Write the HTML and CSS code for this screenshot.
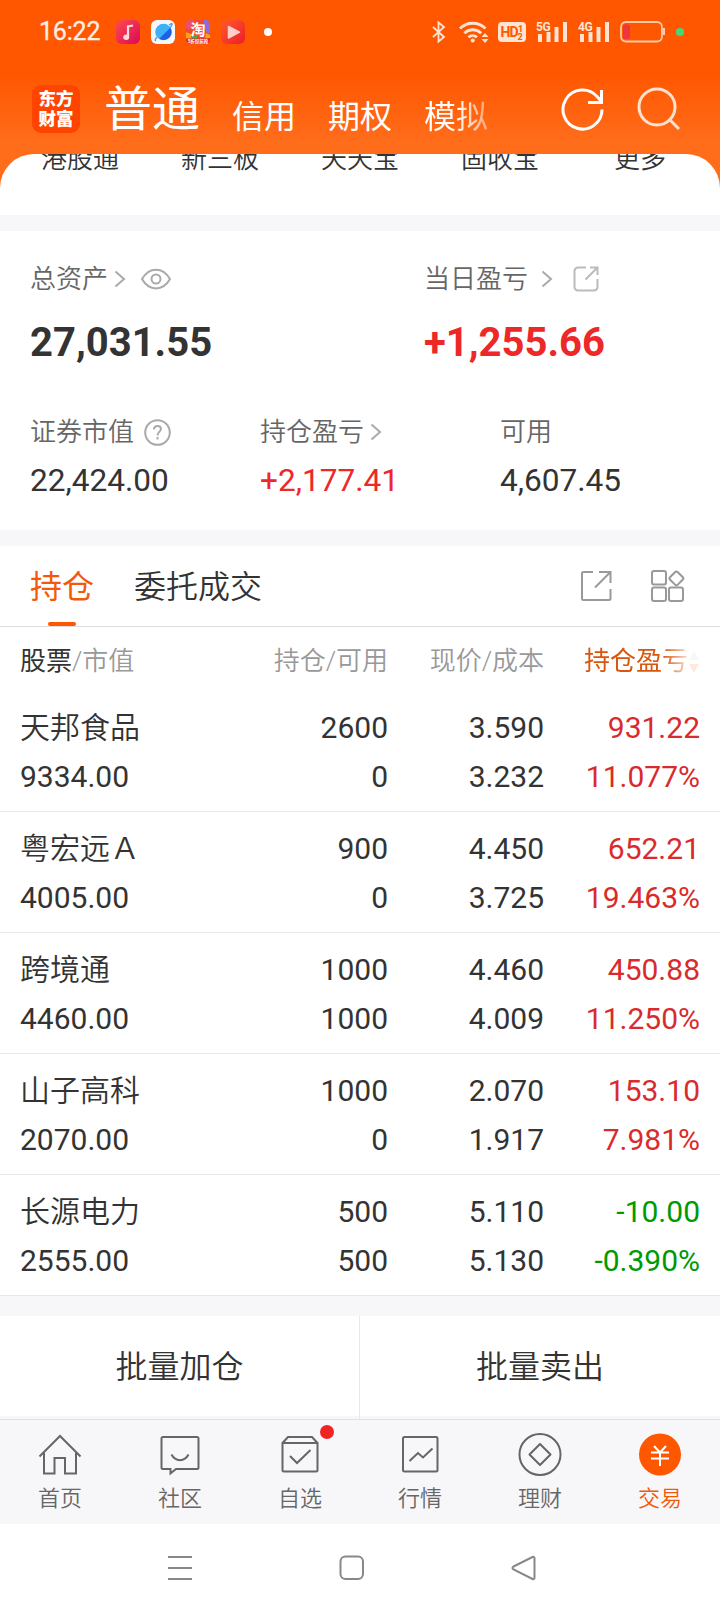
FILE: index.html
```html
<!DOCTYPE html>
<html lang="zh-CN">
<head>
    <meta charset="UTF-8">
    <meta name="viewport" content="width=device-width, initial-scale=1.0">
    <title>东方财富 - 交易</title>
    <link rel="stylesheet" href="styles.css">
</head>
<body>
    <header class="header">
        <!-- 状态栏 -->
        <div class="status-bar">
            <span class="time">16:22</span>
            <div class="status-apps">
                <svg width="24" height="24" viewBox="0 0 24 24">
                    <defs><linearGradient id="music" x1="0" y1="0" x2="1" y2="1"><stop offset="0" stop-color="#ff4a4f"/><stop offset="1" stop-color="#d90a58"/></linearGradient></defs>
                    <rect width="24" height="24" rx="6" fill="url(#music)"/>
                    <path d="M12 17V6.500l5-1" fill="none" stroke="#ffdcdc" stroke-width="2.200"/>
                    <ellipse cx="10.200" cy="17.300" rx="2.900" ry="2.700" fill="#ffdcdc"/>
                </svg>
                <svg width="24" height="24" viewBox="0 0 24 24">
                    <defs><linearGradient id="globe" x1="0" y1="0" x2="1" y2="1"><stop offset=".55" stop-color="#3fb0f8"/><stop offset=".6" stop-color="#1c62e4"/></linearGradient></defs>
                    <rect width="24" height="24" rx="6" fill="#f5f7fb"/>
                    <circle cx="12.500" cy="12" r="8.300" fill="url(#globe)"/>
                    <path d="M6 17c-2 2.500-2.500 4-1 3.500M18 5c2-1.500 3.500-2 3-.5s-1 2-2 3.500" fill="none" stroke="#3e9df5" stroke-width="1.300"/>
                </svg>
                <svg width="24" height="24" viewBox="0 0 24 24">
                    <rect width="24" height="24" rx="5" fill="#f04a2a"/>
                    <path d="M0 8V5a5 5 0 0 1 5-5h3L4 10z" fill="#e8507c"/>
                    <path d="M17 0h2a5 5 0 0 1 5 5v9l-4-2z" fill="#8b6be0"/>
                    <path d="M0 12l5 2v5H0zM20 13l4 2v3h-5z" fill="#f7a21c"/>
                    <path d="M5 15h6v4H5z" fill="#4aa84c"/>
                    <path d="M0 18.500h24V19a5 5 0 0 1-5 5H5a5 5 0 0 1-5-5z" fill="#e3201b"/>
                    <text x="12" y="15" class="app-name">淘</text>
                    <text x="12" y="23.300" class="app-sub">5折提前抢</text>
                </svg>
                <svg width="24" height="24" viewBox="0 0 24 24">
                    <defs><linearGradient id="video" x1="0" y1="0" x2="1" y2="1"><stop offset="0" stop-color="#ff5a2c"/><stop offset="1" stop-color="#ea1f28"/></linearGradient></defs>
                    <rect width="24" height="24" rx="6" fill="url(#video)"/>
                    <path d="M7.500 6.500v11.500L18.500 12.200z" fill="#ffd0c8" stroke="#ffd0c8" stroke-width="1.500" stroke-linejoin="round"/>
                </svg>
                <i class="dot-more"></i>
            </div>
            <div class="status-right">
                <svg width="16" height="24" viewBox="0 0 16 24">
                    <path d="M2 7l11 10-5.500 4.500V2.500L13 7 2 17" stroke="#ffe3d3" stroke-width="1.800"/>
                </svg>
                <svg class="wifi" width="32" height="24" viewBox="0 0 32 24">
                    <path d="M2 8.500c7-7 18.500-7 25.500 0M6.300 13.200c4.700-4.600 12.200-4.600 16.900 0M10.500 17.300c2.400-2.300 6-2.300 8.400 0" stroke="#ffe3d3" stroke-width="2.800"/>
                    <circle cx="14.700" cy="20.500" r="2" fill="#ffe3d3"/>
                    <path d="M23.500 17l3.500-4 3.500 4zM23.500 19l3.500 4 3.500-4z" fill="#ffe3d3"/>
                </svg>
                <svg class="hd" width="28" height="20" viewBox="0 0 28 20">
                    <rect width="28" height="20" rx="4" fill="#ffe3d3"/>
                    <text x="2.500" y="15.300" class="hd-text">HD</text>
                    <text x="20" y="9.500" class="hd-num">1</text>
                    <text x="19.500" y="17.500" class="hd-num">2</text>
                </svg>
                <svg class="signal" width="32" height="24" viewBox="0 0 32 24">
                    <text x="0" y="10.500">5G</text>
                    <path d="M2 14h4v8H2zM10.500 12h4v10h-4zM18.500 7h4v15h-4zM27 2h4v20h-4z"/>
                </svg>
                <svg class="signal" width="32" height="24" viewBox="0 0 32 24">
                    <text x="0" y="10.500">4G</text>
                    <path d="M2 14h4v8H2zM10.500 12h4v10h-4zM18.500 7h4v15h-4zM27 2h4v20h-4z"/>
                </svg>
                <svg class="battery" width="46" height="22" viewBox="0 0 46 22">
                    <rect x="1" y="1" width="41" height="19.500" rx="5" fill="none" stroke="#ffc9a8" stroke-width="1.800"/>
                    <rect x="3" y="3.500" width="7" height="14.500" rx="2.500" fill="#ef3340"/>
                    <path d="M44 7v7" stroke="#ffc9a8" stroke-width="2"/>
                </svg>
                <i class="dot-green"></i>
            </div>
        </div>

        <!-- 账户类型导航 -->
        <div class="nav">
            <div class="logo"><span>东方</span><span>财富</span></div>
            <nav class="nav-tabs">
                <a class="active">普通</a>
                <a>信用</a>
                <a>期权</a>
                <a class="fade">模拟</a>
            </nav>
            <svg class="refresh" width="44" height="44" viewBox="0 0 44 44" stroke="#fff" stroke-width="3">
                <path d="M41 22.500A19.500 19.500 0 1 1 36 9.500L40.500 14.500"/>
                <path d="M40.500 3v12.500H27"/>
            </svg>
            <svg class="search" width="44" height="44" viewBox="0 0 44 44" stroke="#ffe1cf" stroke-width="3">
                <circle cx="20" cy="20" r="18"/>
                <path d="M32 32l10 10"/>
            </svg>
        </div>
    </header>

    <!-- 快捷入口 -->
    <div class="quick-wrap">
        <div class="quick">
            <span>港股通</span>
            <span>新三板</span>
            <span>天天宝</span>
            <span>固收宝</span>
            <span>更多</span>
        </div>
    </div>

    <!-- 资产 -->
    <section class="assets">
        <div class="assets-main">
            <div>
                <div class="label"><span>总资产</span>
                    <svg class="arrow" width="12" height="18" viewBox="0 0 12 18"><path d="M1.500 1.500L10 9l-8.500 7.500"/></svg>
                    <svg class="eye" width="32" height="22" viewBox="0 0 32 22"><path d="M2 11C9-1.500 23-1.500 30 11 23 23.500 9 23.500 2 11z"/><circle cx="16" cy="11" r="4.500"/></svg>
                </div>
                <div class="total">27,031.55</div>
            </div>
            <div>
                <div class="label"><span>当日盈亏</span>
                    <svg class="arrow far" width="12" height="18" viewBox="0 0 12 18"><path d="M1.500 1.500L10 9l-8.500 7.500"/></svg>
                    <svg class="share" width="26" height="26" viewBox="0 0 26 26"><path d="M13 1.500H5A3.500 3.500 0 0 0 1.500 5v16A3.500 3.500 0 0 0 5 24.500h16a3.500 3.500 0 0 0 3.500-3.500v-8M12.500 13.500L24 2M17 1.500h7.500V9"/></svg>
                </div>
                <div class="total up">+1,255.66</div>
            </div>
        </div>
        <div class="assets-sub">
            <div>
                <div class="label"><span>证券市值</span>
                    <svg class="help" width="27" height="27" viewBox="0 0 27 27"><circle cx="13.500" cy="13.500" r="12.300"/><path d="M10 10.500c0-5 7-4.500 7-.5 0 2.500-3.500 3-3.500 6.500"/><path d="M13.500 18v2.500"/></svg>
                </div>
                <div class="num">22,424.00</div>
            </div>
            <div>
                <div class="label"><span>持仓盈亏</span>
                    <svg class="arrow near" width="12" height="18" viewBox="0 0 12 18"><path d="M1.500 1.500L10 9l-8.500 7.500"/></svg>
                </div>
                <div class="num up">+2,177.41</div>
            </div>
            <div>
                <div class="label"><span>可用</span></div>
                <div class="num">4,607.45</div>
            </div>
        </div>
    </section>

    <!-- 持仓列表 -->
    <section class="holdings">
        <div class="tabs">
            <a class="tab active">持仓</a>
            <a class="tab">委托成交</a>
            <svg class="export" width="32" height="32" viewBox="0 0 32 32"><path d="M13 2H3.500A1.500 1.500 0 0 0 2 3.500v25A1.500 1.500 0 0 0 3.500 30H29a1.500 1.500 0 0 0 1.500-1.500V19M15 17.500L30 2.500M19 2h11.500v11"/></svg>
            <svg class="grid" width="34" height="32" viewBox="0 0 34 32"><rect x="1" y="1" width="14" height="13.500" rx="2"/><rect x="1" y="17.500" width="14" height="13.500" rx="2"/><rect x="18" y="17.500" width="14" height="13.500" rx="2"/><rect x="20" y="3" width="10.800" height="10.800" rx="2" transform="rotate(45 25.400 8.400)"/></svg>
        </div>

        <div class="row thead">
            <span><b>股票</b>/市值</span>
            <span>持仓/可用</span>
            <span>现价/成本</span>
            <span class="sort">持仓盈亏<svg width="12" height="24" viewBox="0 0 12 24"><path d="M1 10L6 1l5 9z" fill="#ccc"/><path d="M1 14l5 9 5-9z" fill="#ff6a20"/></svg></span>
        </div>

        <div class="row">
            <span>天邦食品</span><span>2600</span><span>3.590</span><span class="red">931.22</span>
            <span>9334.00</span><span>0</span><span>3.232</span><span class="red">11.077%</span>
        </div>
        <div class="row">
            <span>粤宏远Ａ</span><span>900</span><span>4.450</span><span class="red">652.21</span>
            <span>4005.00</span><span>0</span><span>3.725</span><span class="red">19.463%</span>
        </div>
        <div class="row">
            <span>跨境通</span><span>1000</span><span>4.460</span><span class="red">450.88</span>
            <span>4460.00</span><span>1000</span><span>4.009</span><span class="red">11.250%</span>
        </div>
        <div class="row">
            <span>山子高科</span><span>1000</span><span>2.070</span><span class="red">153.10</span>
            <span>2070.00</span><span>0</span><span>1.917</span><span class="red">7.981%</span>
        </div>
        <div class="row">
            <span>长源电力</span><span>500</span><span>5.110</span><span class="green">-10.00</span>
            <span>2555.00</span><span>500</span><span>5.130</span><span class="green">-0.390%</span>
        </div>
    </section>

    <div class="batch">
        <a>批量加仓</a>
        <a>批量卖出</a>
    </div>

    <!-- 底部菜单 -->
    <footer class="tabbar">
        <a>
            <svg width="44" height="44" viewBox="0 0 44 44"><path d="M1.500 23.500L22 3l20.500 20.500M6 20v20.500h10.500V25h10.500v15.500h11V20"/></svg>
            首页
        </a>
        <a>
            <svg width="44" height="44" viewBox="0 0 44 44"><path d="M5 4h34a1.500 1.500 0 0 1 1.500 1.500v29A1.500 1.500 0 0 1 39 36H18l-5.500 4.500V36H5a1.500 1.500 0 0 1-1.500-1.500v-29A1.500 1.500 0 0 1 5 4zM13.500 21.500c4 7.500 13 7.500 17 0"/></svg>
            社区
        </a>
        <a>
            <svg width="44" height="44" viewBox="0 0 44 44"><path d="M4.500 10h35v27a1.500 1.500 0 0 1-1.500 1.500H6A1.500 1.500 0 0 1 4.500 37V10l5.500-6h24l5.500 6M12 23l7 7 13.500-13"/></svg>
            自选
            <i class="badge"></i>
        </a>
        <a>
            <svg width="44" height="44" viewBox="0 0 44 44"><rect x="5" y="4" width="34.500" height="34.500" rx="1.500"/><path d="M11.500 28l8.500-8 5 4.500 9.500-9"/></svg>
            行情
        </a>
        <a>
            <svg width="44" height="44" viewBox="0 0 44 44"><circle cx="22" cy="21.500" r="20.500"/><path d="M22 11l10.500 10.500L22 32 11.500 21.500z" stroke-linejoin="round"/></svg>
            理财
        </a>
        <a class="active">
            <svg width="44" height="44" viewBox="0 0 44 44"><circle cx="22" cy="21.500" r="21" fill="#ff5600" stroke="none"/><path d="M16 13l6 6.500 6-6.500M22 19.500V33M13 19.500h18M13 25.500h18" stroke="#fff"/></svg>
            交易
        </a>
    </footer>

    <!-- 系统导航键 -->
    <div class="sys-nav">
        <svg width="26" height="26" viewBox="0 0 26 26"><path d="M1 2h24M1 13h24M1 24h24"/></svg>
        <svg width="26" height="26" viewBox="0 0 26 26"><rect x="1.500" y="1.500" width="22.500" height="22.500" rx="5"/></svg>
        <svg width="26" height="26" viewBox="0 0 26 26"><path d="M2.500 11.500L21.500 2q2-.7 2 1.300v19.400q0 2-2 1.300L2.500 14.500q-2-1.500 0-3z"/></svg>
    </div>
</body>
</html>
```
FILE: styles.css
```css
* {
    box-sizing: border-box;
}
body {
    margin: 0;
    width: 720px;
    height: 1612px;
    overflow: hidden;
    font-family: Roboto, "Noto Sans CJK SC", sans-serif;
    color: #333;
    background: #f7f7fa;
}
svg {
    display: block;
    flex: none;
    fill: none;
}

/* 顶部 */
.header {
    height: 154px;
    background: linear-gradient(#ff5600 0, #ff5600 72px, #ff6c1a 140px, #ff6c1a 154px);
    color: #fff;
}
.status-bar {
    height: 64px;
    padding: 0 36px 0 39px;
    display: flex;
    align-items: center;
}
.time {
    width: 77px;
    font-size: 25px;
    line-height: 66px;
    letter-spacing: -0.2px;
    -webkit-text-stroke: 0.3px #ffeee4;
    color: #ffeee4;
}
.status-apps {
    display: flex;
    align-items: center;
    gap: 11px;
}
.app-name {
    font-size: 15px;
    font-weight: bold;
    text-anchor: middle;
    fill: #fff;
}
.app-sub {
    font-size: 4.5px;
    font-weight: bold;
    text-anchor: middle;
    fill: #fff;
}
.dot-more {
    width: 8px;
    height: 8px;
    margin-left: 8px;
    border-radius: 50%;
    background: #fff;
}
.status-right {
    margin-left: auto;
    display: flex;
    align-items: center;
}
.wifi { margin-left: 11px; }
.hd { margin-left: 8px; }
.signal {
    margin-left: 10px;
    fill: #ffe3d3;
    font-size: 12px;
    font-weight: bold;
    letter-spacing: -0.5px;
}
.battery { margin-left: 10px; }
.hd-text {
    font-size: 14px;
    font-weight: bold;
    fill: #ff5600;
    letter-spacing: -1px;
}
.hd-num {
    font-size: 9px;
    font-weight: bold;
    fill: #ff5600;
}
.dot-green {
    width: 8px;
    height: 8px;
    margin-left: 10px;
    border-radius: 50%;
    background: #43d97b;
}
.nav {
    height: 90px;
    padding: 0 38px 0 32px;
    display: flex;
    align-items: flex-start;
}
.logo {
    width: 48px;
    height: 48px;
    margin-top: 21px;
    padding-top: 4px;
    border-radius: 9px;
    background: #ff4400;
    font-size: 17.5px;
    font-weight: 900;
    line-height: 20px;
    text-align: center;
}
.logo span {
    display: block;
}
.nav-tabs {
    width: 450px;
    margin-left: 24px;
    display: flex;
    gap: 32px;
    font-size: 32px;
    line-height: 106px;
}
.nav-tabs .active {
    font-size: 48px;
    line-height: 92px;
}
.fade {
    color: transparent;
    background: linear-gradient(90deg, #fff 50%, rgba(255, 255, 255, 0.4));
    -webkit-background-clip: text;
    background-clip: text;
}
.refresh {
    margin: 23px 0 0 7px;
}
.search {
    margin: 23px 0 0 32px;
}

/* 快捷入口 */
.quick-wrap {
    height: 61px;
    background: #ff6c1a;
}
.quick {
    height: 61px;
    padding: 0 10px;
    overflow: hidden;
    display: flex;
    background: #fff;
    border-radius: 34px 34px 0 0;
    font-size: 26px;
    font-weight: 350;
    line-height: 11px;
}
.quick span {
    width: 140px;
    text-align: center;
}

/* 资产 */
.assets {
    height: 299px;
    margin-top: 16px;
    padding: 28px 30px 0;
    background: #fff;
}
.label {
    height: 40px;
    display: flex;
    align-items: center;
    font-size: 26px;
    font-weight: 350;
    line-height: 41px;
    color: #666;
}
.label span {
    height: 40px;
}
.label svg {
    stroke: #aaa;
    stroke-width: 2;
}
.arrow { margin-left: 6px; }
.far { margin-left: 13px; }
.near { margin-left: 6px; }
.eye { margin-left: 14px; }
.share { margin-left: 20px; }
.label .share {
    stroke: #bbb;
}
.help { margin-left: 10px; }
.assets-main {
    height: 153px;
    display: grid;
    grid-template-columns: 394px 1fr;
}
.assets-sub {
    display: grid;
    grid-template-columns: 230px 240px 1fr;
}
.total {
    margin-top: 19px;
    font-size: 40px;
    font-weight: bold;
    line-height: 50px;
}
.num {
    margin-top: 8px;
    font-size: 31.6px;
    line-height: 41px;
}
.up {
    color: #ec2828;
}

/* 持仓 */
.holdings {
    margin-top: 16px;
    background: #fff;
}
.tabs {
    height: 81px;
    padding: 0 35px 0 30px;
    display: flex;
    border-bottom: 1px solid #ddd;
    font-size: 32px;
    font-weight: 350;
    line-height: 83px;
}
.tab {
    margin-right: 40px;
}
.tab.active {
    color: #f25a0a;
    font-weight: 400;
    display: flex;
    flex-direction: column;
    align-items: center;
}
.tab.active::after {
    content: "";
    width: 28px;
    height: 4px;
    margin-top: -7px;
    border-radius: 2px;
    background: #ff5600;
}
.tabs svg {
    margin-top: 24px;
    stroke: #999;
    stroke-width: 2;
}
.tabs .export { margin-left: auto; }
.grid { margin-left: 39px; }
.row {
    height: 121px;
    padding: 12px 20px 11px;
    display: grid;
    grid-template-columns: 1fr 150px 156px 156px;
    border-bottom: 1px solid #e8e8e8;
    font-size: 30px;
    line-height: 49px;
    text-align: right;
}
.row span:nth-child(4n+1) {
    text-align: left;
}
.row span:first-child {
    font-weight: 350;
}
.thead {
    height: 64px;
    padding-top: 10px;
    border: 0;
    font-size: 26px;
    font-weight: 350;
    color: #999;
}
.thead b {
    font-weight: 400;
    color: #333;
}
.sort {
    display: flex;
    align-items: center;
    justify-content: flex-end;
    color: #d9560f;
    font-weight: 400;
    -webkit-mask-image: linear-gradient(90deg, #000 118px, rgba(0, 0, 0, 0.15) 146px);
    mask-image: linear-gradient(90deg, #000 118px, rgba(0, 0, 0, 0.15) 146px);
}
.red { color: #d92b2b; }
.green { color: #009900; }

/* 批量操作 */
.batch {
    height: 100px;
    margin-top: 20px;
    display: grid;
    grid-template-columns: 360px 360px;
    background: #fff;
    font-size: 32px;
    font-weight: 350;
    line-height: 103px;
    text-align: center;
}
.batch a:first-child {
    border-right: 1px solid #e8e8e8;
}

/* 底部菜单 */
.tabbar {
    height: 105px;
    margin-top: 3px;
    display: flex;
    border-top: 1px solid #dfe1e5;
    font-size: 22px;
    font-weight: 350;
    line-height: 30px;
    color: #666;
}
.tabbar a {
    flex: 1;
    position: relative;
    display: flex;
    flex-direction: column;
    align-items: center;
    padding-top: 13px;
}
.tabbar svg {
    margin-bottom: 7px;
    stroke: #666;
    stroke-width: 2;
}
.tabbar .active {
    color: #f25a0a;
}
.badge {
    position: absolute;
    top: 5px;
    left: 80px;
    width: 14px;
    height: 14px;
    border-radius: 50%;
    background: #f12424;
}
.sys-nav {
    height: 88px;
    padding: 0 183px 0 167px;
    display: flex;
    justify-content: space-between;
    align-items: center;
    background: #fff;
}
.sys-nav svg {
    stroke: #888;
    stroke-width: 2;
}
```
